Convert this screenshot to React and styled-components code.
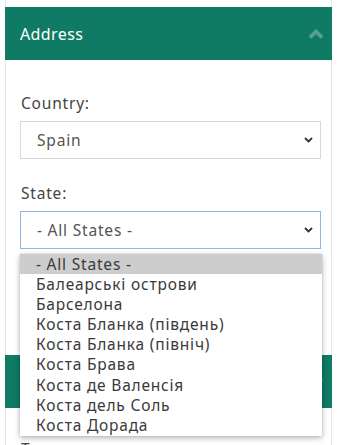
import React from "react";
import styled, { createGlobalStyle } from "styled-components";

const Global = createGlobalStyle`
  html, body { margin: 0; padding: 0; background: #fff; }
  body { font-family: "Noto Sans", "DejaVu Sans", sans-serif; }
  * { box-sizing: border-box; }
`;

const Sidebar = styled.div`
  width: 327px;
  margin-left: 5px;
`;

const TopGap = styled.div`
  height: 7px;
  border-left: 1px solid #e6e6e6;
  border-right: 1px solid #e6e6e6;
`;

const PanelHeader = styled.div`
  height: 53px;
  background: #0f7b65;
  display: flex;
  align-items: center;
  justify-content: space-between;
  padding: 0 8px 0 15px;
  color: #fff;
  font-size: 16px;
  letter-spacing: 0.4px;
`;

const Chevron = styled.svg`
  width: 16px;
  height: 10px;
  transform: rotate(${(p) => (p.$down ? 180 : 0)}deg);
`;

const PanelBody = styled.div`
  border-left: 1px solid #e6e6e6;
  border-right: 1px solid #e6e6e6;
  padding: ${(p) => p.$pad};
`;

const Field = styled.div`
  position: relative;
  & + & { margin-top: 23px; }
`;

const Label = styled.div`
  font-size: 15.5px;
  line-height: 22px;
  letter-spacing: 0.8px;
  color: #444;
  margin: 0 0 7px 1px;
`;

const SelectBox = styled.div`
  width: 301px;
  height: 38px;
  border: 1px solid ${(p) => (p.$focused ? "#8bb9e3" : "#d8d8d8")};
  display: flex;
  align-items: center;
  justify-content: space-between;
  padding: 0 7px 0 16px;
  font-size: 15.5px;
  letter-spacing: 0.8px;
  color: #555;
  background: #fff;
`;

const Arrow = styled.svg`
  width: 9px;
  height: 6px;
`;

const Popup = styled.ul`
  position: absolute;
  top: calc(100% + 5px);
  left: 0;
  width: 302px;
  margin: 0;
  padding: 0 0 1px 0;
  list-style: none;
  background: #fff;
  box-shadow: 0 2px 6px rgba(0, 0, 0, 0.28), 0 0 2px rgba(0, 0, 0, 0.12);
  z-index: 10;
`;

const Option = styled.li`
  height: 20.1px;
  line-height: 20px;
  overflow: hidden;
  padding-left: 16px;
  font-size: 15.5px;
  letter-spacing: 0.8px;
  color: #3a3a3a;
  white-space: nowrap;
  background: ${(p) => (p.$active ? "#cdcdcd" : "transparent")};
`;

const states = [
  "- All States -",
  "Балеарські острови",
  "Барселона",
  "Коста Бланка (південь)",
  "Коста Бланка (північ)",
  "Коста Брава",
  "Коста де Валенсія",
  "Коста дель Соль",
  "Коста Дорада",
];

const HeaderChevron = ({ down }) => (
  <Chevron viewBox="0 0 16 10" $down={down}>
    <polyline
      points="2,8.5 8,2.5 14,8.5"
      fill="none"
      stroke="rgba(255,255,255,0.3)"
      strokeWidth="3.6"
    />
  </Chevron>
);

const SelectArrow = () => (
  <Arrow viewBox="0 0 9 6">
    <polyline points="1,1 4.5,4.5 8,1" fill="none" stroke="#333" strokeWidth="1.8" />
  </Arrow>
);

export default function App() {
  return (
    <>
      <Global />
      <Sidebar>
        <TopGap />
        <PanelHeader>
          <span>Address</span>
          <HeaderChevron />
        </PanelHeader>
        <PanelBody $pad="32px 10px 106px 14px">
          <Field>
            <Label>Country:</Label>
            <SelectBox>
              <span>Spain</span>
              <SelectArrow />
            </SelectBox>
          </Field>
          <Field>
            <Label>State:</Label>
            <SelectBox $focused>
              <span>- All States -</span>
              <SelectArrow />
            </SelectBox>
            <Popup>
              {states.map((s, i) => (
                <Option key={s} $active={i === 0}>
                  {s}
                </Option>
              ))}
            </Popup>
          </Field>
        </PanelBody>
        <PanelHeader>
          <span>Price</span>
          <HeaderChevron down />
        </PanelHeader>
        <PanelBody $pad="30px 10px 20px 14px">
          <Field>
            <Label>Type:</Label>
          </Field>
        </PanelBody>
      </Sidebar>
    </>
  );
}
